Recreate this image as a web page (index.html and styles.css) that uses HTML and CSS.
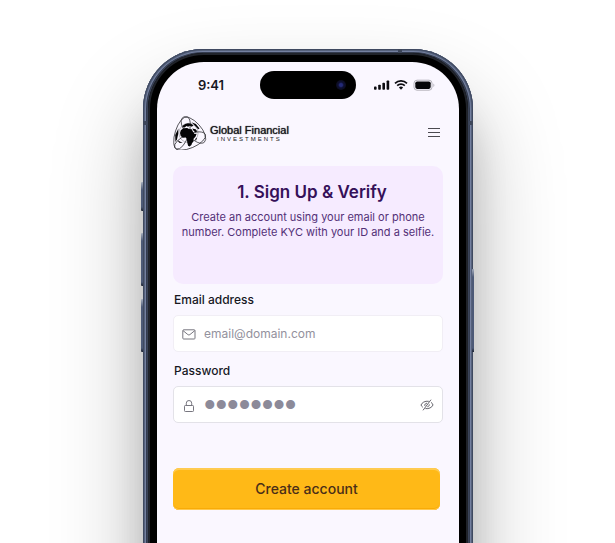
FILE: index.html
```html
<!DOCTYPE html>
<html lang="en">
<head>
<meta charset="utf-8">
<meta name="viewport" content="width=device-width, initial-scale=1">
<title>Global Financial Investments</title>
<link rel="stylesheet" href="styles.css">
</head>
<body>
<div class="stage">
  <div class="phone">
    <span class="key key-action"></span>
    <span class="key key-up"></span>
    <span class="key key-down"></span>
    <span class="key key-power"></span>
    <span class="band band-left"></span>
    <span class="band band-right"></span>
    <span class="band band-top"></span>
    <div class="bezel">
      <div class="screen">
        <div class="status">
          <span class="time">9:41</span>
          <span class="island"><span class="lens"></span></span>
          <svg class="signals" viewBox="0 0 62 14" aria-hidden="true">
            <g fill="#0b0b10">
              <rect x="0" y="8.600" width="2.600" height="3.200" rx=".8"/>
              <rect x="4.200" y="6.800" width="2.600" height="5" rx=".8"/>
              <rect x="8.400" y="4.800" width="2.600" height="7" rx=".8"/>
              <rect x="12.600" y="2.400" width="2.600" height="9.400" rx=".8"/>
              <path d="M27 8.500a3 3 0 0 1 2.100.9L27 11.700l-2.100-2.300A3 3 0 0 1 27 8.500Z"/>
            </g>
            <g fill="none" stroke="#0b0b10" stroke-width="1.700">
              <path d="M21 5.400a8.600 8.600 0 0 1 12 0"/>
              <path d="M23.200 7.700a5.400 5.400 0 0 1 7.600 0"/>
            </g>
            <rect x="40" y="2.200" width="18" height="10" rx="3" fill="none" stroke="#b5b3bb"/>
            <rect x="41.300" y="3.500" width="15.400" height="7.400" rx="1.800" fill="#050508"/>
            <path d="M59.400 5.500c1.300.5 1.300 2.900 0 3.400Z" fill="#b5b3bb"/>
          </svg>
        </div>
        <header class="header">
          <a class="brand" href="#">
            <svg class="mark" viewBox="0 0 34 34" aria-hidden="true">
              <g fill="none" stroke="#26262b" stroke-width=".7">
                <ellipse cx="9" cy="17" rx="16.800" ry="6.800" transform="rotate(-72 9 17)"/>
                <ellipse cx="17" cy="25" rx="16.600" ry="7" transform="rotate(-23 17 25)"/>
                <ellipse cx="20.400" cy="14" rx="16.400" ry="7.600" transform="rotate(48 20.400 14)"/>
                <circle cx="15.500" cy="17" r="9.600" stroke-width=".3"/>
              </g>
              <g fill="#050507">
                <path d="M7.800 14.200l2.600-2 3.800-.3 1.800 1 2.700.3 1.400 2.900 1.500 1.900 2-.2-1 2.600-2.200 2.500.1 2.400-1.500 1.900-.6 1.700-1.800 1.500-1.500-.6-.9-3.500-.3-3.200-1.200-1.600-2.800.2-2.200-1.800-.7-2.900Z"/>
                <path d="M9.400 11.200l.6-1.600 2.200-1.600 2.800-.7 3.200.4 2.200 1.900-1.600 1.200-2-1.100-1.700 1-1.700-.6-1.600 1.500Z"/>
                <path d="M19.200 12.400l3.500.8 1.500 2-1.700 1.400-1.900-1.900Z"/>
                <path d="M18.500 6.200l4.400 1.800 3.600 4.600-1.300.6-2.500-2.600Z"/>
                <path d="M2.200 19l3.200-6.500-.2 5.500-1.200 5.200-1.600 2.800Z"/>
                <path d="M4.300 24l2.600 1.600 2.800 1.400-3.500-.2Z"/>
                <path d="M22.200 24l.8-2.200.9.300-.9 2.600Z"/>
              </g>
            </svg>
            <span class="wordmark">
              <span class="name">Global Financial</span>
              <span class="sub">INVESTMENTS</span>
            </span>
          </a>
          <button class="menu" type="button" aria-label="Menu">
            <svg viewBox="0 0 14 12" aria-hidden="true"><path d="M1 1.500h12M1 5.500h12M1 9.500h12" stroke="#4b4a50" fill="none"/></svg>
          </button>
        </header>
        <main class="main">
          <section class="card">
            <h1>1. Sign Up &amp; Verify</h1>
            <p>Create an account using your email or phone number. Complete KYC with your ID and a selfie.</p>
          </section>
          <form class="form">
            <label for="email">Email address</label>
            <div class="field">
              <svg class="icon" viewBox="0 0 14 14" fill="none" stroke="#77767f" aria-hidden="true">
                <rect x=".8" y="2.800" width="12.200" height="9.200" rx=".8"/>
                <path d="M1 3.600l4.900 4q1 .8 2 0l4.900-4"/>
              </svg>
              <input id="email" type="email" placeholder="email@domain.com">
            </div>
            <label for="password">Password</label>
            <div class="field field-active">
              <svg class="icon" viewBox="0 0 14 14" fill="none" stroke="#77767f" aria-hidden="true">
                <rect x="2.500" y="7.500" width="9" height="6" rx=".8"/>
                <path d="M4.300 7.500V5.200a2.700 2.700 0 0 1 5.400 0v2.300"/>
              </svg>
              <input id="password" class="secret" type="password" value="password">
              <button class="reveal" type="button" aria-label="Show password">
                <svg viewBox="0 0 14 12" fill="none" stroke="#55545c" stroke-width=".9" aria-hidden="true">
                  <path d="M8.800 2.300C4.800 1.700 2 3.600 1 6c.4 1 1 1.700 1.800 2.300M11 3.400C12.100 4 12.700 4.900 13 6c-1.200 2.700-4.200 4-7.600 3.600M4.800 6.900C4.500 5.300 5.600 4.300 7 4.200M9.300 5.400c.2 1.300-.7 2.200-2 2.400M3 11.300L11 .7"/>
                </svg>
              </button>
            </div>
            <div class="actions"><button class="submit" type="submit">Create account</button></div>
          </form>
        </main>
      </div>
    </div>
  </div>
</div>
</body>
</html>
```
FILE: styles.css
```css
* {
  box-sizing: border-box;
}

body {
  margin: 0;
  background: #fff;
  color: #17171f;
  font-family: Inter, "Liberation Sans", sans-serif;
}

button {
  border: 0;
  padding: 0;
  background: none;
  font: inherit;
}

svg {
  display: block;
}

.stage {
  height: 100vh;
  overflow: hidden;
  padding: 49px 0 0 1px;
}

/* Device shell */
.phone {
  position: relative;
  max-width: 330px;
  margin: 0 auto;
  padding: 4px 5px 5px;
  border-radius: 60px;
  background: #3a4358;
  box-shadow:
    inset 0 0 0 1px #3f4960,
    inset 0 0 0 2px #56627c,
    inset 0 0 0 3px #7480a0,
    inset 0 0 0 4px #333b4e,
    0 50px 90px rgba(0, 0, 0, 0.28),
    0 50px 36px rgba(0, 0, 0, 0.13);
}

.bezel {
  padding: 9px;
  border-radius: 56px;
  background: #000;
  box-shadow: inset 0 0 0 2px #20232a;
}

.screen {
  min-height: 640px;
  border-radius: 47px;
  background: #faf7ff;
}

.key {
  position: absolute;
  left: -2px;
  width: 2px;
  border-radius: 1px 0 0 1px;
  background: linear-gradient(#a5adbc, #4d5a77 8px, #4d5a77 calc(100% - 4px), #1c2332);
}

.key-action {
  top: 133px;
  height: 29px;
}

.key-up {
  top: 184px;
  height: 53px;
}

.key-down {
  top: 250px;
  height: 53px;
}

.key-power {
  top: 220px;
  right: -1px;
  left: auto;
  height: 83px;
}

.band {
  position: absolute;
  background: #3d465a;
}

.band-left,
.band-right {
  top: 72px;
  width: 4px;
  height: 4px;
}

.band-left {
  left: 0;
}

.band-right {
  right: 0;
}

.band-top {
  top: 0;
  right: 71px;
  width: 4px;
  height: 4px;
}

/* Status bar */
.status {
  display: grid;
  grid-template-columns: 1fr 96px 1fr;
  align-items: center;
  height: 46px;
  padding: 0 23px;
}

.time {
  justify-self: center;
  padding-right: 18px;
  font-size: 13px;
  font-weight: 600;
  line-height: 16px;
}

.island {
  display: flex;
  align-items: center;
  justify-content: flex-end;
  height: 28px;
  padding-right: 10px;
  border-radius: 14px;
  background: #000;
}

.lens {
  width: 10px;
  height: 10px;
  border-radius: 50%;
  background: radial-gradient(#242a78 0 20%, #0e1033 40%, #0b0a16 80%);
}

.signals {
  justify-self: end;
  width: 62px;
  height: 14px;
}

/* Header */
.header {
  display: flex;
  align-items: center;
  justify-content: space-between;
  height: 50px;
  padding: 0 18px 0 16px;
}

.brand {
  display: flex;
  align-items: center;
  gap: 3px;
  color: #17171b;
  text-decoration: none;
}

.mark {
  width: 34px;
  height: 34px;
}

.wordmark {
  display: flex;
  flex-direction: column;
  align-items: center;
  font-family: "Liberation Sans", Arial, sans-serif;
}

.name {
  font-size: 11px;
  line-height: 12px;
  text-shadow: 0 0 1px #17171b;
}

.sub {
  font-size: 6px;
  line-height: 6px;
  letter-spacing: 2px;
}

.menu svg {
  width: 14px;
  height: 12px;
}

/* Content */
.main {
  padding: 8px 16px;
}

.card {
  min-height: 118px;
  padding: 14px 8px;
  border-radius: 10px;
  background: #f6ebff;
  text-align: center;
}

.card h1 {
  margin: 0 0 6px;
  padding-left: 8px;
  color: #351059;
  font-size: 17px;
  font-weight: 600;
  line-height: 24px;
}

.card p {
  margin: 0;
  color: #533077;
  font-size: 11px;
  line-height: 15px;
}

.form {
  display: flex;
  flex-direction: column;
}

.form label {
  padding: 8px 1px 7px;
  font-size: 12px;
  font-weight: 500;
  line-height: 16px;
}

.field {
  display: flex;
  align-items: center;
  gap: 8px;
  height: 37px;
  margin-bottom: 3px;
  padding: 0 8px;
  border: 1px solid #f1eef5;
  border-radius: 5px;
  background: #fff;
}

.field-active {
  border-color: #e3e2e8;
}

.icon {
  flex: none;
  width: 14px;
  height: 14px;
}

.field input {
  flex: 1;
  min-width: 0;
  height: 32px;
  padding: 0;
  border: 0;
  outline: 0;
  background: none;
  color: #8c8a99;
  font-family: inherit;
  font-size: 12px;
}

.field input::placeholder {
  color: #93919d;
}

.field .secret {
  font-family: "Liberation Sans", Arial, sans-serif;
  font-size: 33px;
}

.reveal svg {
  width: 14px;
  height: 12px;
}

.actions {
  display: flex;
  padding: 42px 3px 0 0;
}

.submit {
  flex: 1;
  height: 42px;
  border-radius: 6px;
  background: #ffb917;
  box-shadow: inset 0 2px 0 #ffcb50, inset 0 -1px 0 #ffc94e, inset 0 -2px 0 #f9ab07;
  color: #4a2e18;
  font-size: 14px;
  font-weight: 500;
  line-height: 20px;
}
```
